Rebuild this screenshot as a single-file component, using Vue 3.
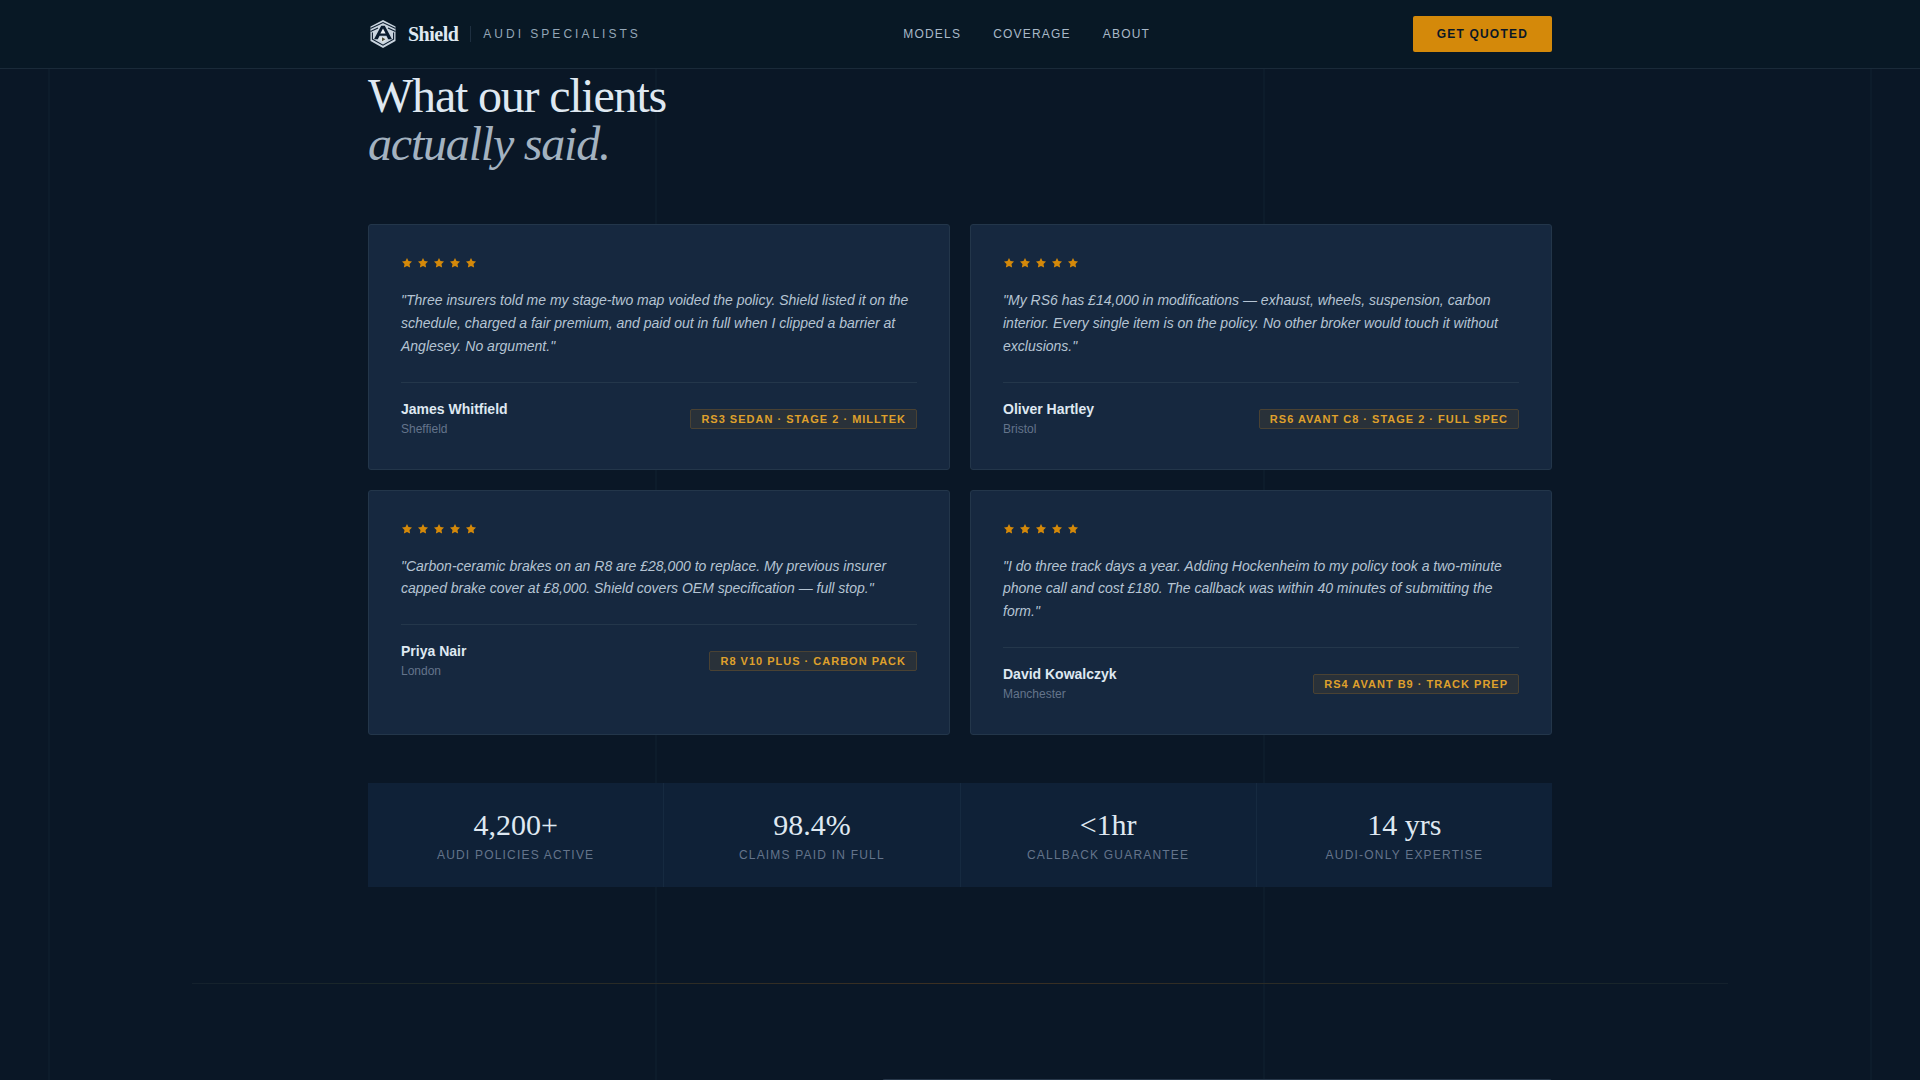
<template>
  <div class="page">
    <div class="guides">
      <span v-for="n in 4" :key="n"></span>
    </div>

    <header class="nav">
      <div class="wrap nav-inner">
        <div class="brand">
          <svg class="logo" viewBox="0 0 28 30" fill="none">
            <path d="M14 1 26.5 7.5V22L14 29 1.5 22V7.5Z" fill="#c9d4de" />
            <path d="M1.5 9.4 14 3.6 26.5 9.4M1.5 12.6 9 9M26.5 12.6 19 9M3.4 13.4V20.2L14 26.2 24.6 20.2V13.4" stroke="#0b1c2e" stroke-width="1.1" />
            <path d="M5 20.2 12.2 6.8H15.8L23 20.2H19.2L17.4 16.8H10.6L8.8 20.2Z" fill="#0b1c2e" />
            <path d="M14 9.6 16.6 14.6H11.4Z" fill="#f0f4f8" />
            <path d="M10.8 18H17.2L18.2 20 14 24 9.8 20Z" fill="#dbe2e6" />
            <path d="M13 18.2 16.4 20.2 13 22.2Z" fill="#4b4a35" />
          </svg>
          <span class="name">Shield</span>
          <span class="sep"></span>
          <span class="tagline">AUDI SPECIALISTS</span>
        </div>
        <nav class="links">
          <a v-for="l in links" :key="l">{{ l }}</a>
        </nav>
        <button class="cta">GET QUOTED</button>
      </div>
    </header>

    <main class="wrap content">
      <h2>What our clients<br /><em>actually said.</em></h2>

      <div class="cards">
        <article v-for="r in reviews" :key="r.name" class="card">
          <div class="stars">
            <svg v-for="n in 5" :key="n" viewBox="0 0 12 12">
              <path d="M6 1 7.5 4.1 11 4.6 8.5 7 9.1 10.6 6 8.9 2.9 10.6 3.5 7 1 4.6 4.5 4.1Z" />
            </svg>
          </div>
          <p class="quote">"{{ r.quote }}"</p>
          <div class="foot">
            <div>
              <div class="author">{{ r.name }}</div>
              <div class="city">{{ r.city }}</div>
            </div>
            <span class="tag">{{ r.car }}</span>
          </div>
        </article>
      </div>

      <div class="stats">
        <div v-for="s in stats" :key="s.label" class="stat">
          <div class="value">{{ s.value }}</div>
          <div class="label">{{ s.label }}</div>
        </div>
      </div>
    </main>

    <div class="rule"></div>

    <section class="wrap next">
      <div class="panel"></div>
    </section>
  </div>
</template>

<script setup>
const links = ["MODELS", "COVERAGE", "ABOUT"];

const reviews = [
  {
    quote: "Three insurers told me my stage-two map voided the policy. Shield listed it on the schedule, charged a fair premium, and paid out in full when I clipped a barrier at Anglesey. No argument.",
    name: "James Whitfield",
    city: "Sheffield",
    car: "RS3 SEDAN · STAGE 2 · MILLTEK",
  },
  {
    quote: "My RS6 has £14,000 in modifications — exhaust, wheels, suspension, carbon interior. Every single item is on the policy. No other broker would touch it without exclusions.",
    name: "Oliver Hartley",
    city: "Bristol",
    car: "RS6 AVANT C8 · STAGE 2 · FULL SPEC",
  },
  {
    quote: "Carbon-ceramic brakes on an R8 are £28,000 to replace. My previous insurer capped brake cover at £8,000. Shield covers OEM specification — full stop.",
    name: "Priya Nair",
    city: "London",
    car: "R8 V10 PLUS · CARBON PACK",
  },
  {
    quote: "I do three track days a year. Adding Hockenheim to my policy took a two-minute phone call and cost £180. The callback was within 40 minutes of submitting the form.",
    name: "David Kowalczyk",
    city: "Manchester",
    car: "RS4 AVANT B9 · TRACK PREP",
  },
];

const stats = [
  { value: "4,200+", label: "AUDI POLICIES ACTIVE" },
  { value: "98.4%", label: "CLAIMS PAID IN FULL" },
  { value: "<1hr", label: "CALLBACK GUARANTEE" },
  { value: "14 yrs", label: "AUDI-ONLY EXPERTISE" },
];
</script>

<style>
body{background:#0a1726}
</style>

<style scoped>
.page{position:relative;height:1080px;overflow:hidden;background:#0a1726;color:#dfe8f1;font-family:"Liberation Sans",Arial,sans-serif}
.wrap{width:1184px;margin:0 auto;position:relative}

/* faint vertical guides behind everything */
.guides{position:absolute;top:0;bottom:0;left:48px;right:48px;display:flex;justify-content:space-between}
.guides span{width:2px;background:#0d1c2b}

.nav{position:relative;background:#081825;border-bottom:1px solid #1a2a39}
.nav-inner{display:flex;justify-content:space-between;align-items:center;height:68px}
.brand{display:flex;align-items:center}
.logo{width:28px;height:30px;margin:0 11px 0 1px}
.name{font-family:"Liberation Serif",serif;font-weight:700;font-size:20px;letter-spacing:-.5px}
.sep{width:1px;height:16px;background:#1e2f40;margin:0 12px}
.tagline{font-size:12px;letter-spacing:3px;color:#94a6b7}
.links{display:flex;gap:32px}
.links a{font-size:12px;letter-spacing:1.2px;color:#a8b8c8}
.cta{border:0;border-radius:2px;background:#d4890a;color:#0a1726;height:36px;padding:0 24px;font:700 12px "Liberation Sans",Arial,sans-serif;letter-spacing:1.2px}

.content{padding-top:3.2px}
h2{margin:0 0 56px;font:400 48px/48px "Liberation Serif",serif;letter-spacing:-1.2px}
h2 em{color:#a3b2c0}

.cards{display:grid;grid-template-columns:1fr 1fr;gap:20px}
.card{background:#16283f;border:1px solid #23364a;border-radius:3px;padding:32px}
.stars{display:flex;gap:4px;margin-bottom:20px}
.stars svg{width:12px;height:12px;fill:#d4890a}
.quote{margin:0 0 24.1px;font-size:14px;line-height:1.625;font-style:italic;color:#b5c4d3}
.foot{display:flex;justify-content:space-between;align-items:center;border-top:1px solid #24374b;padding-top:18px}
.author{font-size:14px;font-weight:700;line-height:17px}
.city{font-size:12px;line-height:15px;margin-top:4px;color:#64748b}
.tag{font-size:11px;font-weight:700;line-height:12px;letter-spacing:1px;color:#dfa02c;background:#293139;border:1px solid #4a4233;border-radius:2px;padding:3px 10px}

.stats{display:grid;grid-template-columns:repeat(4,1fr);gap:1px;margin-top:48px;background:#162a40}
.stat{background:#0f2137;height:104px;display:flex;flex-direction:column;align-items:center;padding-top:26px;box-sizing:border-box}
.value{font:400 30px/32px "Liberation Serif",serif}
.label{margin-top:7px;font-size:12px;line-height:14px;letter-spacing:1.2px;color:#64748b}

.rule{position:relative;height:1px;margin:96px 192px 0;background:linear-gradient(90deg,#14212d,#1c2829 12%,#3d3022 50%,#1c2829 88%,#14212d)}
.next{display:flex;justify-content:flex-end;padding-top:95.1px}
.panel{width:670px;height:40px;background:#16283f;border-top:1px solid #28384a;border-radius:3px}
</style>
